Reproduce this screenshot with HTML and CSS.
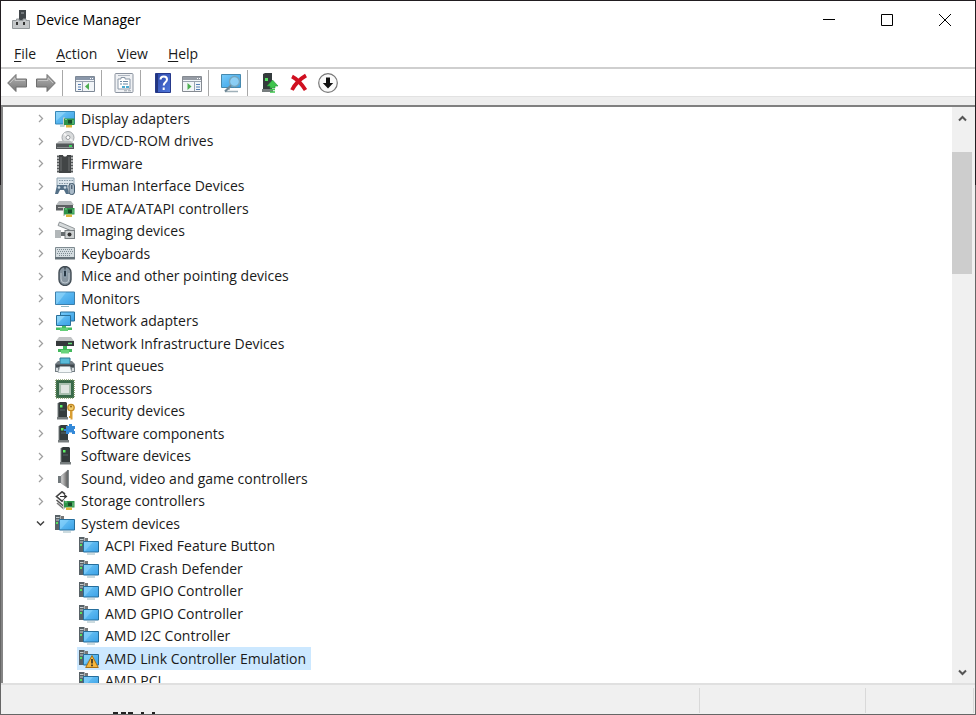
FILE: index.html
```html
<!DOCTYPE html>
<html lang="en">
<head>
<meta charset="utf-8">
<title>Device Manager</title>
<link rel="stylesheet" href="styles.css">
</head>
<body>
<svg class="defs" aria-hidden="true">
  <defs>
    <linearGradient id="blue" x1="0" y1="0" x2="1" y2="1"><stop offset="0" stop-color="#79ccfa"/><stop offset=".5" stop-color="#55b4ef"/><stop offset="1" stop-color="#3aa0e6"/></linearGradient>
    <linearGradient id="gray" x1="0" y1="0" x2="0" y2="1"><stop offset="0" stop-color="#b4b4b4"/><stop offset="1" stop-color="#777"/></linearGradient>
    <linearGradient id="metal" x1="0" y1="0" x2="1" y2="0"><stop offset="0" stop-color="#ddd"/><stop offset=".5" stop-color="#999"/><stop offset="1" stop-color="#555"/></linearGradient>
    <linearGradient id="help" x1="0" y1="0" x2="1" y2="1"><stop offset="0" stop-color="#2c46a8"/><stop offset="1" stop-color="#4f78dc"/></linearGradient>
  </defs>
  <symbol id="i-chev" viewBox="0 0 9 9"><path d="M3 1l3.500 3.500L3 8" fill="none" stroke="#a0a0a0" stroke-width="1.300"/></symbol>
  <symbol id="i-card" viewBox="0 0 12 10"><path d="M0 0h2v9H0z" fill="#c8cfc9"/><path d="M1 1h10.500v6.500H1z" fill="#2e9449"/><path d="M3 7.500h6V10H3z" fill="#dcb53c"/><path d="M5 2.500h4v3.500H5z" fill="#174d29"/><path d="M2 2h2M10 2.500v4" stroke="#79cc8c" fill="none"/></symbol>
  <symbol id="i-display" viewBox="0 0 20 20"><path d="M.5 2.500h19v12.500H.5z" fill="url(#blue)" stroke="#3788b8"/><path d="M1 3h10L1 12z" fill="#9adbfc" opacity=".6"/><path d="M5 17h4v-1" stroke="#7aa" fill="none"/><use href="#i-card" x="8" y="8" width="12" height="11"/></symbol>
  <symbol id="i-dvd" viewBox="0 0 20 20"><circle cx="13" cy="6.500" r="6" fill="#d9dbdc" stroke="#a3a7aa"/><path d="M13 6.500L9 2.500M13 6.500l4.500 4" stroke="#f4f4f4" stroke-width="2"/><circle cx="13" cy="6.500" r="2" fill="#fff" stroke="#979b9e"/><path d="M4 10h12l3 3H1z" fill="#b9bcbd"/><path d="M1 12.500h18V18H1z" fill="#54585a"/><path d="M2 16.500h16" stroke="#8c9092"/><path d="M14 14h3v2h-3z" fill="#39d45c"/></symbol>
  <symbol id="i-firm" viewBox="0 0 20 20"><path d="M4 1h4c0 2 4 2 4 0h4v18H4z" fill="#424546"/><path d="M6 3v14M14 3v14" stroke="#6d7071"/><path d="M2 2.500H4M2 5.500H4M2 8.500H4M2 11.500H4M2 14.500H4M2 17.500H4M16 2.500h2M16 5.500h2M16 8.500h2M16 11.500h2M16 14.500h2M16 17.500h2" stroke="#55595a" stroke-width="1.800"/></symbol>
  <symbol id="i-hid" viewBox="0 0 20 20"><path d="M2 2h17v8H2z" fill="#dce6ed" stroke="#92a5b2"/><path d="M4 4.500h14M4 7.500h14" stroke="#8195a2" stroke-dasharray="1.500 1"/><path d="M2 9h10l2 9h-3l-2-4H5l-2 4H0z" fill="#547087"/><circle cx="4" cy="11.500" r="1.300" fill="#cbdae6"/><circle cx="10" cy="11.500" r="1.300" fill="#cbdae6"/><rect x="14" y="7.500" width="5.500" height="11" rx="2.500" fill="#a8b9c7" stroke="#435b6e"/><path d="M16.800 9v4" stroke="#345"/></symbol>
  <symbol id="i-ide" viewBox="0 0 20 20"><path d="M4 2h12l3 4H1z" fill="#b7bbbd"/><path d="M1 6h17v5.500H1z" fill="#5c6062"/><path d="M3 8.500h5" stroke="#bbb"/><use href="#i-card" x="8" y="7" width="12" height="12"/></symbol>
  <symbol id="i-image" viewBox="0 0 20 20"><path d="M5 3.500L18 10" stroke="#596064" stroke-width="2"/><path d="M4.500 1L3 4.500 17 10l2-.5.5-2z" fill="#d6dadb" stroke="#7b8285" stroke-width=".8"/><rect x="10" y="9.500" width="9.500" height="8" fill="#ccd0d1" stroke="#777d80"/><path d="M0 9h6v8H0z" fill="#b2b7b9"/><path d="M6 11h4v4H6z" fill="#666c6f"/><circle cx="14.500" cy="13.500" r="2" fill="#333"/></symbol>
  <symbol id="i-key" viewBox="0 0 20 20"><path d="M.5 3.500h19v11H.5z" fill="#d4dce0" stroke="#7f8b91"/><path d="M2 5.500h16M3 7.500h15M2 9.500h16M4 11.500h12" stroke="#7d8b92" stroke-dasharray="1 1"/><path d="M0 13h20v2.500H0z" fill="#667279"/></symbol>
  <symbol id="i-mouse" viewBox="0 0 20 20"><rect x="4" y=".5" width="12" height="19" rx="6" fill="#8795a0" stroke="#424c54" stroke-width="1.400"/><path d="M6 7v6a4 4 0 0 0 8 0V7" fill="none" stroke="#bcc6cd"/><path d="M10 1v5" stroke="#263038"/><rect x="8.500" y="4" width="3" height="7" rx="1.500" fill="#273744" stroke="#bcd0df" stroke-width=".6"/></symbol>
  <symbol id="i-monitor" viewBox="0 0 20 20"><path d="M.5 3h19v12.500H.5z" fill="url(#blue)" stroke="#3c7fab"/><path d="M1 3.500h10L2 15H1z" fill="#91d6fa" opacity=".6"/><path d="M6 17.500h8" stroke="#90b8c4"/></symbol>
  <symbol id="i-net" viewBox="0 0 20 20"><path d="M5.500 1h14v9h-14z" fill="url(#blue)" stroke="#286f99"/><path d="M1.500 4.500h14v10h-14z" fill="url(#blue)" stroke="#286f99"/><path d="M2 5h8l-8 8z" fill="#a1dffc" opacity=".6"/><path d="M7 15h4v1.500h6V19H1v-2.500h6z" fill="#45bd60"/><path d="M5 17h8v3H5z" fill="#63cf78"/></symbol>
  <symbol id="i-netinf" viewBox="0 0 20 20"><path d="M4 3h12l3 4H1z" fill="#c0c3c4"/><path d="M1 7h18v5H1z" fill="#35393b"/><path d="M13 9.500h4" stroke="#66df78" stroke-width="1.500"/><path d="M8 12h4v3h5v3H3v-3h5z" fill="#43b85c"/><path d="M6 16h8v3.500H6z" fill="#68d37c"/></symbol>
  <symbol id="i-print" viewBox="0 0 20 20"><path d="M5 2h10v6H5z" fill="#57bad8" stroke="#2e7894"/><path d="M3 5h2v3h10V5h2l3 3v8H0V8z" fill="#737d83"/><path d="M1 8.500h18v2.500H1z" fill="#41494e"/><path d="M5 10.500h10l2 6H3z" fill="#f3f7f8" stroke="#9da9ad" stroke-width=".7"/><path d="M1 12h2v3H1zM17 12h2v3h-2z" fill="#d5dadd"/></symbol>
  <symbol id="i-cpu" viewBox="0 0 20 20"><path d="M1 1h18v18H1z" fill="#386949"/><path d="M1 .8h18M1 19.200h18M.8 1v18M19.200 1v18" stroke="#7f9865" stroke-width="1.300" stroke-dasharray="1 1"/><path d="M5 5h10v10H5z" fill="#dfe5e1" stroke="#a9c0b0" stroke-width="2"/></symbol>
  <symbol id="i-dev" viewBox="0 0 20 20"><path d="M6 2l2-1h6l1 1v14H6z" fill="#343b3c"/><path d="M6 2v14" stroke="#788080"/><path d="M8 9h5" stroke="#566"/><path d="M8 4h2.500v2.500H8z" fill="#5dee65"/><path d="M5 16h11v2.500H5z" fill="#777d7e"/></symbol>
  <symbol id="i-sec" viewBox="0 0 20 20"><use href="#i-dev" x="-3" width="20" height="20"/><circle cx="16" cy="6.500" r="3.200" fill="#f4cd6c" stroke="#c48a24" stroke-width="1.300"/><circle cx="16" cy="5.500" r="1" fill="#8c641c"/><path d="M15 10h2.500v8.500H15.500V17h-1.500v-2h1z" fill="#d99e32"/></symbol>
  <symbol id="i-comp" viewBox="0 0 20 20"><use href="#i-dev" x="-2" width="20" height="20"/><path d="M11 2h3V0h3v2h3v3h-1v2h1v3h-3V8.500h-3V10h-3V7H9V5h2z" fill="#3489d8"/></symbol>
  <symbol id="i-sound" viewBox="0 0 20 20"><path d="M3 7h4v7H3z" fill="#70777a"/><path d="M6 7l7-6v18l-7-5z" fill="url(#metal)" stroke="#8c8f90" stroke-width=".6"/><path d="M13 1v18" stroke="#666c6f" stroke-width="1.500"/></symbol>
  <symbol id="i-storage" viewBox="0 0 20 20"><path d="M10 3L7 .8 1.500 5.500 7 10.200 9 8.500" fill="none" stroke="#444" stroke-width="1.600"/><path d="M5 5.500h6M9 3.500l2.500 2L9 7.500" fill="none" stroke="#333" stroke-width="1.200"/><path d="M1.500 9l7 6" stroke="#555" stroke-width="1.600"/><path d="M2 12l7 6" stroke="#777" stroke-width="1.600"/><use href="#i-card" x="8" y="8" width="12" height="12"/></symbol>
  <symbol id="i-system" viewBox="0 0 20 20"><path d="M0 1h5.500v15H0z" fill="#596267"/><path d="M1 3.500h3.500M1 6h3.500" stroke="#c5cccf"/><path d="M1 8h2v2H1z" fill="#54df60"/><path d="M6 2h3v3H6z" fill="#777"/><path d="M4.500 5.500h15v10.500h-15z" fill="url(#blue)" stroke="#266e9c"/><path d="M5 6h9l-8 9H5z" fill="#90d5fb" opacity=".5"/><path d="M8 18h8" stroke="#9ab7bf"/></symbol>
  <symbol id="i-warn" viewBox="0 0 20 20"><use href="#i-system" width="20" height="20"/><path d="M13 6.500L19.300 18.500H6.700z" fill="#f6b73c" stroke="#a66f16" stroke-linejoin="round"/><path d="M13 10v4.500M13 15.500v1.700" stroke="#222" stroke-width="1.500"/></symbol>
</svg>

<main class="window">
  <header class="titlebar">
    <svg class="app-icon" viewBox="0 0 18 20"><path d="M7 0h7v10H7z" fill="#41464a"/><path d="M9 3h3" stroke="#a6abae"/><path d="M.5 10.500h4V9H7v1.500h4V9h3v1.500h3.500v8H.5z" fill="#c5c8ca" stroke="#92979a"/><path d="M4 12h2v3H4zM11 12h2v3h-2z" fill="#333"/></svg>
    <h1>Device Manager</h1>
    <button class="caption" aria-label="Minimize"><svg viewBox="0 0 12 12"><path d="M0 5.500h12"/></svg></button>
    <button class="caption" aria-label="Maximize"><svg viewBox="0 0 12 12"><path d="M.5 .5h11v11H.5z"/></svg></button>
    <button class="caption" aria-label="Close"><svg viewBox="0 0 12 12"><path d="M0 0l12 12M12 0L0 12"/></svg></button>
  </header>
  <nav class="menu">
    <button><u>F</u>ile</button><button><u>A</u>ction</button><button><u>V</u>iew</button><button><u>H</u>elp</button>
  </nav>
  <div class="toolbar" role="toolbar" aria-label="Tools">
    <button aria-label="Back"><svg viewBox="0 0 20 20"><path d="M.7 10L9 1.500V6h10.500v8H9v4.500z" fill="url(#gray)" stroke="#6f6f6f"/><path d="M3 10l5-5v2.500h10" fill="none" stroke="#c4c4c4"/></svg></button>
    <button aria-label="Forward"><svg viewBox="0 0 20 20"><path d="M19.300 10L11 1.500V6H.5v8H11v4.500z" fill="url(#gray)" stroke="#6f6f6f"/><path d="M2 7.500h10V5l5 5" fill="none" stroke="#c4c4c4"/></svg></button>
    <span class="sep"></span>
    <button aria-label="Show console tree"><svg viewBox="0 0 20 20"><path d="M.5 3.500h19v15H.5z" fill="#f2f5f8" stroke="#7d8896"/><path d="M1 4h18v3H1z" fill="#8a97aa"/><path d="M15 5.500h3" stroke="#fff" stroke-dasharray="1 1"/><path d="M1 8.500h18M7.500 9v9" stroke="#98a2af"/><path d="M3 11.500h3M3 14h3M3 16.500h3" stroke="#547fb5"/><path d="M14 10v7l-4-3.500z" fill="#4caf50"/></svg></button>
    <span class="sep"></span>
    <button aria-label="Properties"><svg viewBox="0 0 20 20"><rect x="1" y=".5" width="18" height="19" rx="1" fill="#eff1f4" stroke="#8c94a0"/><path d="M4 2.500h12" stroke="#aeb6c0"/><path d="M4 6h3V4.500h4V6h5v10H4z" fill="#fff" stroke="#8b98a7"/><path d="M6 8.500h2M9 8.500h5M6 11h2M9 11h5" stroke="#6c89a6"/><path d="M8 14h3M12 14h3" stroke="#4cabd1" stroke-width="2"/><path d="M10 17.800h3M14 17.800h3" stroke="#9ca3aa"/></svg></button>
    <span class="sep"></span>
    <button aria-label="Help"><svg viewBox="0 0 20 20"><path d="M2.500.5h15v19h-15z" fill="url(#help)" stroke="#26398b"/><path d="M3 1h2v18H3z" fill="#223680"/><path d="M7.500 6.500C7.500 2.500 14 2.500 14 6.500c0 3-3.300 2.700-3.300 6M10.700 14.500v2.500" fill="none" stroke="#fff" stroke-width="2"/></svg></button>
    <button aria-label="Show action pane"><svg viewBox="0 0 20 20"><path d="M.5 3.500h19v15H.5z" fill="#f2f5f8" stroke="#858a91"/><path d="M1 4h18v3H1z" fill="#969ca5"/><path d="M15 5.500h3" stroke="#fff" stroke-dasharray="1 1"/><path d="M1 8.500h18M12.500 9v9" stroke="#98a2af"/><path d="M14 11.500h4M14 14h4M14 16.500h4" stroke="#547fb5"/><path d="M5.500 10v7l4-3.500z" fill="#4caf50"/></svg></button>
    <span class="sep"></span>
    <button aria-label="Scan for hardware changes"><svg viewBox="0 0 20 20"><path d="M.5 1.500h19v13H.5z" fill="url(#blue)" stroke="#4689ae"/><path d="M8 15v2M4 18.500h13" stroke="#9fb0b9" stroke-width="1.500"/><circle cx="13.500" cy="8.500" r="5" fill="#a5dcf8" fill-opacity=".7" stroke="#74a5bd" stroke-width="1.400"/><path d="M10 12.500L4 18.500" stroke="#6f8795" stroke-width="2.200"/></svg></button>
    <span class="sep"></span>
    <button aria-label="Update driver"><svg viewBox="0 0 20 20"><path d="M3 1l2-1h7v16H3z" fill="#343b3c"/><path d="M5 5h3v3H5z" fill="#53e361"/><path d="M2 16h11v3H2z" fill="#777d7e"/><path d="M12.500 7l5.500 6h-3v2h-5v-2H7z" fill="#3ec44c" stroke="#259435" stroke-width=".6"/><path d="M10 16.500h5M10 19h5" stroke="#3ec44c" stroke-width="1.400"/></svg></button>
    <button aria-label="Uninstall device"><svg viewBox="0 0 20 20"><path d="M3 3.500c6 3 10 8 13.500 13.500M17 2.500C11 6 6 11 3 17" fill="none" stroke="#d00f20" stroke-width="3.800"/></svg></button>
    <button aria-label="Disable device"><svg viewBox="0 0 20 20"><circle cx="10" cy="10" r="9.300" fill="#fafafa" stroke="#777" stroke-width="1.200"/><path d="M8 4.500h4V10h3.200L10 15.500 4.800 10H8z" fill="#111"/></svg></button>
  </div>
  <section class="pane">
    <ul class="tree">
      <li><button aria-label="Expand"><svg><use href="#i-chev"/></svg></button><svg class="icon"><use href="#i-display"/></svg><span>Display adapters</span></li>
      <li><button aria-label="Expand"><svg><use href="#i-chev"/></svg></button><svg class="icon"><use href="#i-dvd"/></svg><span>DVD/CD-ROM drives</span></li>
      <li><button aria-label="Expand"><svg><use href="#i-chev"/></svg></button><svg class="icon"><use href="#i-firm"/></svg><span>Firmware</span></li>
      <li><button aria-label="Expand"><svg><use href="#i-chev"/></svg></button><svg class="icon"><use href="#i-hid"/></svg><span>Human Interface Devices</span></li>
      <li><button aria-label="Expand"><svg><use href="#i-chev"/></svg></button><svg class="icon"><use href="#i-ide"/></svg><span>IDE ATA/ATAPI controllers</span></li>
      <li><button aria-label="Expand"><svg><use href="#i-chev"/></svg></button><svg class="icon"><use href="#i-image"/></svg><span>Imaging devices</span></li>
      <li><button aria-label="Expand"><svg><use href="#i-chev"/></svg></button><svg class="icon"><use href="#i-key"/></svg><span>Keyboards</span></li>
      <li><button aria-label="Expand"><svg><use href="#i-chev"/></svg></button><svg class="icon"><use href="#i-mouse"/></svg><span>Mice and other pointing devices</span></li>
      <li><button aria-label="Expand"><svg><use href="#i-chev"/></svg></button><svg class="icon"><use href="#i-monitor"/></svg><span>Monitors</span></li>
      <li><button aria-label="Expand"><svg><use href="#i-chev"/></svg></button><svg class="icon"><use href="#i-net"/></svg><span>Network adapters</span></li>
      <li><button aria-label="Expand"><svg><use href="#i-chev"/></svg></button><svg class="icon"><use href="#i-netinf"/></svg><span>Network Infrastructure Devices</span></li>
      <li><button aria-label="Expand"><svg><use href="#i-chev"/></svg></button><svg class="icon"><use href="#i-print"/></svg><span>Print queues</span></li>
      <li><button aria-label="Expand"><svg><use href="#i-chev"/></svg></button><svg class="icon"><use href="#i-cpu"/></svg><span>Processors</span></li>
      <li><button aria-label="Expand"><svg><use href="#i-chev"/></svg></button><svg class="icon"><use href="#i-sec"/></svg><span>Security devices</span></li>
      <li><button aria-label="Expand"><svg><use href="#i-chev"/></svg></button><svg class="icon"><use href="#i-comp"/></svg><span>Software components</span></li>
      <li><button aria-label="Expand"><svg><use href="#i-chev"/></svg></button><svg class="icon"><use href="#i-dev"/></svg><span>Software devices</span></li>
      <li><button aria-label="Expand"><svg><use href="#i-chev"/></svg></button><svg class="icon"><use href="#i-sound"/></svg><span>Sound, video and game controllers</span></li>
      <li><button aria-label="Expand"><svg><use href="#i-chev"/></svg></button><svg class="icon"><use href="#i-storage"/></svg><span>Storage controllers</span></li>
      <li><button aria-label="Collapse"><svg viewBox="0 0 9 9"><path d="M1 2.500L4.500 6 8 2.500" fill="none" stroke="#404040" stroke-width="1.500"/></svg></button><svg class="icon"><use href="#i-system"/></svg><span>System devices</span></li>
      <li class="child"><svg class="icon"><use href="#i-system"/></svg><span>ACPI Fixed Feature Button</span></li>
      <li class="child"><svg class="icon"><use href="#i-system"/></svg><span>AMD Crash Defender</span></li>
      <li class="child"><svg class="icon"><use href="#i-system"/></svg><span>AMD GPIO Controller</span></li>
      <li class="child"><svg class="icon"><use href="#i-system"/></svg><span>AMD GPIO Controller</span></li>
      <li class="child"><svg class="icon"><use href="#i-system"/></svg><span>AMD I2C Controller</span></li>
      <li class="child selected"><svg class="icon"><use href="#i-warn"/></svg><span>AMD Link Controller Emulation</span></li>
      <li class="child"><svg class="icon"><use href="#i-system"/></svg><span>AMD PCI</span></li>
    </ul>
    <div class="scroll">
      <button aria-label="Scroll up"><svg viewBox="0 0 9 9"><path d="M1 6.500L4.500 3 8 6.500"/></svg></button>
      <div class="track"><div class="thumb"></div></div>
      <button aria-label="Scroll down"><svg viewBox="0 0 9 9"><path d="M1 2.500L4.500 6 8 2.500"/></svg></button>
    </div>
  </section>
  <footer class="status"><span></span><span></span><span></span>
    <svg class="edge" viewBox="0 0 46 2" aria-hidden="true"><path d="M1 1h5M9 1h5M16 1h5M29 1h3M40 1h3" stroke="#222" stroke-width="2"/></svg>
  </footer>
</main>
</body>
</html>
```
FILE: styles.css
```css
* { box-sizing: border-box; }
body {
  margin: 0;
  background: linear-gradient(#211d20 185px, #666 185px);
  color: #1a1a1a;
  font: 14px/20px "Open Sans", "Noto Sans", sans-serif;
}
button {
  display: flex;
  align-items: center;
  justify-content: center;
  padding: 0;
  border: 0;
  background: none;
  color: inherit;
  font: inherit;
}
svg { display: block; flex: none; }
.defs { position: absolute; width: 0; height: 0; }
.window {
  display: flex;
  flex-direction: column;
  height: 100vh;
  padding: 1px;
}
.titlebar {
  display: flex;
  align-items: center;
  height: 38px;
  padding: 0 1px 0 11px;
  background: #fff;
}
.app-icon { width: 18px; height: 20px; }
h1 {
  flex: 1;
  margin: 0 0 0 6px;
  color: #000;
  font-size: 14px;
  font-weight: 400;
}
.caption { width: 58px; height: 38px; }
.caption svg { width: 12px; height: 12px; fill: none; stroke: #000; }
.menu {
  display: flex;
  align-items: center;
  gap: 20px;
  height: 28px;
  padding: 2px 0 0 13px;
  background: #fff;
}
.menu u { text-underline-offset: 2px; }
.toolbar {
  display: flex;
  align-items: center;
  height: 30px;
  padding-left: 1px;
  border-top: 2px solid #cfcfcf;
  border-bottom: 1px solid #e2e2e2;
  background: #fff;
}
.toolbar button { width: 29px; height: 26px; }
.toolbar svg { width: 20px; height: 20px; }
.sep {
  width: 1px;
  height: 26px;
  margin: 0 7px 0 2px;
  background: #a8a8a8;
}
.pane {
  display: flex;
  flex: 1;
  min-height: 0;
  border-top: 8px solid #eee;
  background: #fff;
}
.tree {
  flex: 1;
  overflow: hidden;
  margin: 0;
  padding: 0 0 0 33px;
  border-top: 2px solid #808080;
  border-left: 2px solid #858585;
  list-style: none;
}
.tree li { display: flex; align-items: center; height: 23px; }
.tree li:nth-child(even) { height: 22px; }
.tree button { width: 9px; height: 18px; margin-right: 10px; }
.tree button svg { width: 9px; height: 9px; }
.tree .icon { width: 20px; height: 20px; }
.tree span { padding: 0 5px 0 6px; white-space: nowrap; }
.tree .child { width: max-content; margin-left: 41px; padding-left: 2px; }
.tree .selected { background: #cce8ff; }
.scroll {
  display: flex;
  flex-direction: column;
  width: 23px;
  padding-right: 3px;
  border-top: 2px solid #808080;
  background: #f0f0f0;
}
.scroll button { width: 20px; height: 22px; }
.scroll svg { width: 9px; height: 9px; fill: none; stroke: #555; stroke-width: 2; }
.track { flex: 1; padding-top: 23px; }
.thumb { height: 24%; background: #cdcdcd; }
.status {
  position: relative;
  display: flex;
  height: 31px;
  padding: 3px 1px 1px 0;
  border-top: 2px solid #e0e0e0;
  background: #f0f0f0;
}
.status span { width: 166px; border-right: 1px solid #d9d9d9; }
.status span:first-child { flex: 1; }
.status span:last-of-type { width: 108px; }
.edge {
  position: absolute;
  bottom: 0;
  left: 111px;
  width: 46px;
  height: 2px;
}
```
